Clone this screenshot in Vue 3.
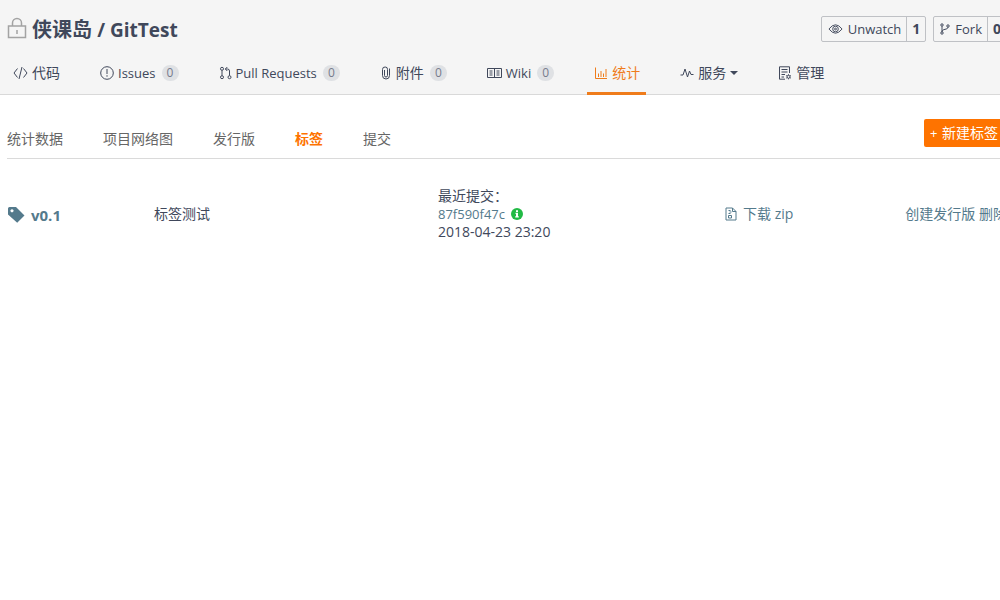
<script setup>
const repoTabs = [
  { icon: 'code', label: '代码' },
  { icon: 'issue', label: 'Issues', count: 0, latin: true },
  { icon: 'pull', label: 'Pull Requests', count: 0, latin: true },
  { icon: 'clip', label: '附件', count: 0 },
  { icon: 'book', label: 'Wiki', count: 0, latin: true },
  { icon: 'chart', label: '统计', active: true },
  { icon: 'pulse', label: '服务', caret: true },
  { icon: 'manage', label: '管理' },
]
const subTabs = ['统计数据', '项目网络图', '发行版', '标签', '提交']
</script>

<template>
  <div class="page">
    <header class="repo-header">
      <div class="title-row">
        <h1>
          <svg class="lock" viewBox="0 0 20 22"><path d="M5.500 9V6a4.500 4.500 0 0 1 9 0v3M1.500 9h17v11.500h-17zM10 13v4" /></svg>
          <a href="#">侠课岛 <span class="repo">/ GitTest</span></a>
        </h1>
        <div class="actions">
          <div class="action">
            <button type="button">
              <svg class="eye" viewBox="0 0 16 12"><path d="M1 6q7-9 14 0-7 9-14 0z" /><circle cx="8" cy="6" r="3" /><circle cx="8" cy="6" r="1" /></svg>
              Unwatch
            </button>
            <a class="total" href="#">1</a>
          </div>
          <div class="action">
            <button type="button">
              <svg class="fork" viewBox="0 0 10 12"><circle cx="2" cy="2" r="1.200" /><circle cx="8" cy="3" r="1.200" /><circle cx="2" cy="10" r="1.200" /><path d="M2 3.200v5.600M8 4.200C8 7 2 5.500 2 8.800" /></svg>
              Fork
            </button>
            <a class="total" href="#">0</a>
          </div>
        </div>
      </div>
      <nav class="repo-nav">
        <a v-for="tab in repoTabs" :key="tab.icon" href="#" :class="['tab', tab.icon, { active: tab.active, latin: tab.latin }]">
          <svg v-if="tab.icon === 'code'" viewBox="0 0 15 14"><path d="M4.500 2.500 1 7l3.500 4.500M10.500 2.500 14 7l-3.500 4.500M9 1 6 13" /></svg>
          <svg v-else-if="tab.icon === 'issue'" viewBox="0 0 14 14"><circle cx="7" cy="7" r="6.300" /><path d="M7 3v5M7 9.200v1.500" /></svg>
          <svg v-else-if="tab.icon === 'pull'" viewBox="0 0 12 14"><circle cx="2.500" cy="2.800" r="1.500" /><circle cx="2.500" cy="11.200" r="1.500" /><circle cx="10" cy="11.200" r="1.500" /><path d="M2.500 4.300v5.400M10 9.700V5Q10 3 8 3H6M7.800 1 5.800 3l2 2" /></svg>
          <svg v-else-if="tab.icon === 'clip'" viewBox="0 0 10 14"><path d="M3.500 4v5.500a1.500 1.500 0 0 0 3 0V3.500A2.300 2.300 0 0 0 4.200 1 2.500 2.500 0 0 0 1.500 3.500V9.500a3.500 3.500 0 0 0 7 0V2.500" /></svg>
          <svg v-else-if="tab.icon === 'book'" viewBox="0 0 15 12"><path d="M.5 1.500h14v9H.5zM7.500 1.500v9M2.500 4h3M2.500 6h3M2.500 8h3M9.500 4h3M9.500 6h3M9.500 8h3" /></svg>
          <svg v-else-if="tab.icon === 'chart'" viewBox="0 0 13 14"><path d="M1 1.500v11h11.500M4 11V7.500M6.500 11V5M9 11V7.500M11.500 11V3" /></svg>
          <svg v-else-if="tab.icon === 'pulse'" viewBox="0 0 14 12"><path d="M.5 8h2.500L5 2l2.500 8 2-6 1.500 3.500h2.500" /></svg>
          <svg v-else viewBox="0 0 14 14"><path d="M7 13.200H1.500V.8h10V7M3.500 3.500h6M3.500 6h6M3.500 8.500H7M3.500 11H6" /><circle cx="10.500" cy="10.800" r="1.500" /><path d="M10.500 8.300v1M10.500 12.300v1M8.300 9.500l.9.500M11.900 11.600l.9.500M8.300 12.100l.9-.5M11.900 10l.9-.5" /></svg>
          <span>{{ tab.label }}</span>
          <span v-if="tab.count !== undefined" class="badge">{{ tab.count }}</span>
          <i v-if="tab.caret" class="caret"></i>
        </a>
      </nav>
    </header>

    <main class="content">
      <div class="sub-bar">
        <nav class="sub-nav">
          <a v-for="name in subTabs" :key="name" href="#" :class="{ current: name === '标签' }">{{ name }}</a>
        </nav>
        <button type="button" class="new-tag"><span class="plus">+</span> 新建标签</button>
      </div>

      <table class="tags">
        <tbody>
          <tr>
            <td class="name">
              <a href="#">
                <svg viewBox="0 0 17 16"><path fill-rule="evenodd" d="M1.500 0H8l8.500 8.500-7.300 7.200L0 7.500v-6Q0 0 1.500 0zM4 2.200a1.600 1.600 0 1 0 .01 0z" /></svg>
                v0.1
              </a>
            </td>
            <td class="message">标签测试</td>
            <td class="commit">
              <div>最近提交：</div>
              <div class="hash">
                <a href="#">87f590f47c</a>
                <svg viewBox="0 0 12 12"><circle cx="6" cy="6" r="6" /><path d="M5 2.200h2v1.700H5zM4.500 4.800H7v3.500h.8v1.300H4.200V8.300H5V6h-.5z" /></svg>
              </div>
              <div>2018-04-23 23:20</div>
            </td>
            <td class="download">
              <a href="#">
                <svg viewBox="0 0 12 14"><path d="M1 1h6.500L11 4.500V13H1zM7.500 1v3.500H11" /><path d="M3.500 3.500h2M4.500 5h2M3.500 6.500h2M3.500 8.500h3v2.500h-3z" /></svg>
                下载 zip
              </a>
            </td>
            <td class="operate"><a href="#">创建发行版</a> <a href="#">删除</a></td>
          </tr>
        </tbody>
      </table>
    </main>
  </div>
</template>

<style>
body {
  margin: 0;
  background: #fff;
}
</style>

<style scoped>
.page {
  min-height: 100vh;
  overflow-x: hidden;
  color: #40485b;
  font: 14px/18px "Open Sans", "Noto Sans CJK SC", sans-serif;
}
a {
  color: inherit;
  text-decoration: none;
}
button {
  font: inherit;
  color: inherit;
  cursor: pointer;
}
svg {
  flex: none;
  fill: none;
  stroke: currentColor;
  stroke-width: 1;
}
.repo-header {
  background: #f5f5f5;
  border-bottom: 1px solid #d9d9d9;
}
.title-row {
  display: flex;
  justify-content: space-between;
  align-items: center;
  height: 53px;
  padding-top: 5px;
  box-sizing: border-box;
  margin: 0 -7px 0 7px;
}
h1 {
  display: flex;
  align-items: center;
  gap: 5px;
  margin: 0;
  padding-top: 2px;
  font-size: 20px;
  line-height: 28px;
}
.repo {
  font-size: 19px;
}
.lock {
  width: 20px;
  height: 22px;
  color: #a3a3a3;
  stroke-width: 1.5;
  margin-top: -4px;
}
.actions {
  display: flex;
  gap: 7px;
  font-size: 13px;
}
.action {
  display: flex;
  height: 24px;
  border: 1px solid #bfc1c5;
  border-radius: 2px;
  line-height: 24px;
}
.action button {
  display: flex;
  align-items: center;
  gap: 5px;
  padding: 0 5px 0 6px;
  border: 0;
  background: none;
}
.eye {
  width: 15px;
  height: 12px;
}
.fork {
  width: 10px;
  height: 12px;
}
.total {
  border-left: 1px solid #bfc1c5;
  width: 18px;
  text-align: center;
  font-size: 14px;
  font-weight: bold;
}
.repo-nav {
  display: flex;
  gap: 27px;
  height: 41px;
  padding-left: 6px;
}
.tab {
  display: flex;
  align-items: center;
  gap: 4px;
  padding: 0 6px 0 7px;
  white-space: nowrap;
  box-sizing: border-box;
  height: 42px;
  border-bottom: 3px solid transparent;
}
.tab svg {
  width: 14px;
  height: 14px;
}
.tab.code svg,
.tab.book svg {
  width: 15px;
}
.tab.pull svg {
  width: 13px;
}
.tab.clip svg {
  width: 12px;
}
.tab.latin {
  font-size: 13px;
}
.tab.active {
  color: #ef7c1b;
  border-color: #ef7c1b;
}
.badge {
  width: 17px;
  margin-left: 2px;
  border-radius: 8px;
  background: #dfe1e4;
  color: #777b8c;
  font-size: 12px;
  line-height: 16px;
  text-align: center;
}
.caret {
  border: 4px solid transparent;
  border-top-color: currentColor;
  border-bottom: 0;
}
.content {
  margin: 0 -7px 0 7px;
}
.sub-bar {
  display: flex;
  justify-content: space-between;
  align-items: center;
  height: 64px;
  padding-top: 13px;
  box-sizing: border-box;
  border-bottom: 1px solid #dadada;
}
.sub-nav {
  display: flex;
  gap: 40px;
  padding-top: 12px;
  color: #666;
}
.sub-nav .current {
  color: #fe7300;
  font-weight: bold;
}
.new-tag {
  height: 28px;
  padding: 0 9px 0 6px;
  border: 0;
  border-radius: 2px;
  background: #fe7300;
  color: #fff;
}
.plus {
  margin-right: 1px;
  font-size: 13px;
}
.tags {
  width: 100%;
  margin-top: 28px;
  border-collapse: collapse;
  table-layout: fixed;
}
td {
  padding: 0;
  white-space: nowrap;
}
.tags a {
  color: #547a8c;
}
.name {
  width: 14.700%;
}
.message {
  width: 28.400%;
}
.commit {
  width: 28.700%;
}
.commit div {
  line-height: 18px;
}
.download a,
.name a,
.hash {
  display: flex;
  align-items: center;
}
.name a {
  gap: 6px;
  padding: 2px 0 0 1px;
  font-size: 15px;
  font-weight: bold;
}
.name svg {
  width: 17px;
  height: 16px;
  fill: currentColor;
  stroke: none;
}
.hash {
  gap: 6px;
  font-size: 13px;
}
.hash svg {
  width: 12px;
  height: 12px;
  stroke: none;
}
.hash circle {
  fill: #21ba45;
}
.hash path {
  fill: #fff;
}
.download a {
  gap: 6px;
}
.download svg {
  width: 12px;
  height: 14px;
}
.operate {
  text-align: right;
}
</style>
